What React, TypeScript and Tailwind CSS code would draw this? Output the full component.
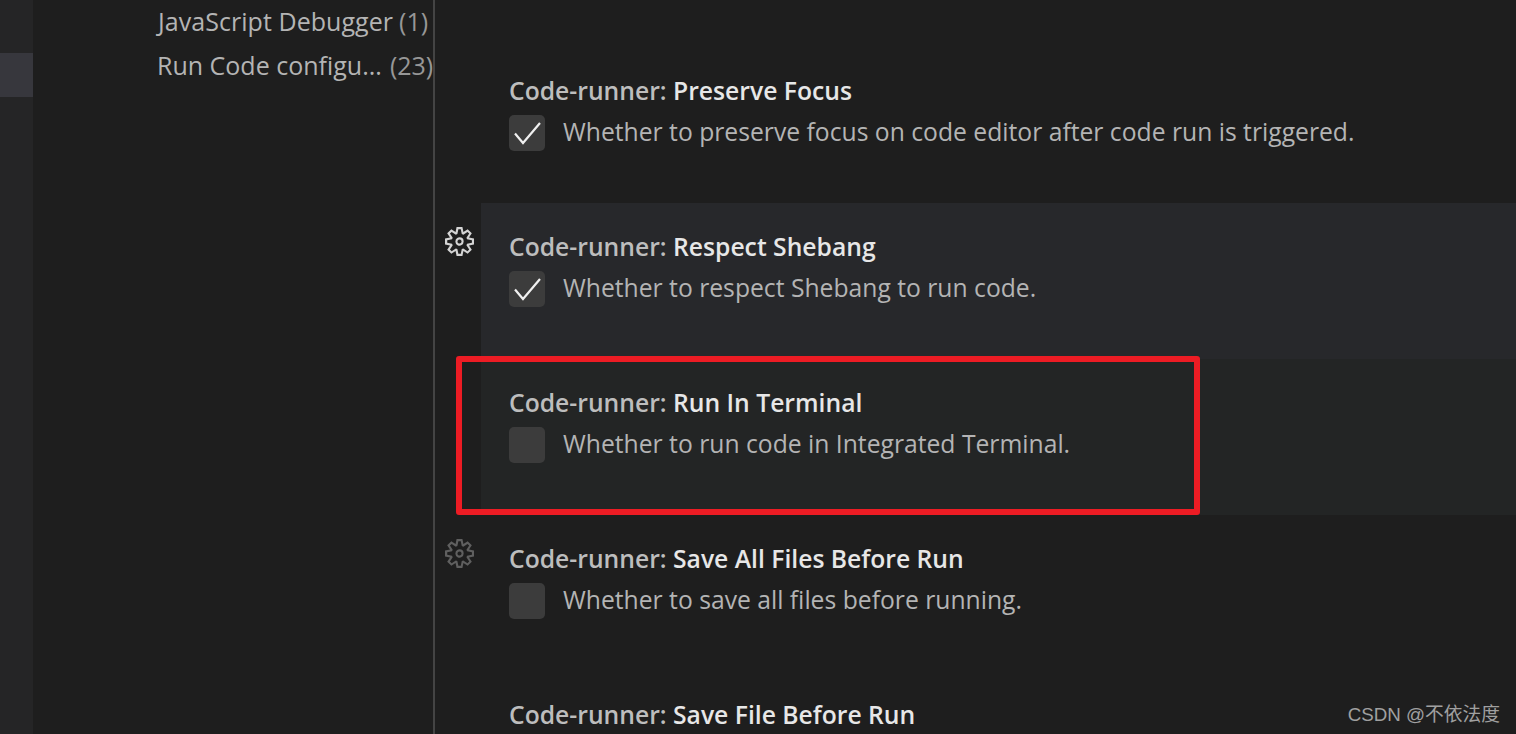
import { VscSettingsGear } from "react-icons/vsc";

type Setting = {
  name: string;
  description: string;
  checked: boolean;
  gear?: "bright" | "dim";
  rowClass?: string;
};

const settings: Setting[] = [
  {
    name: "Preserve Focus",
    description: "Whether to preserve focus on code editor after code run is triggered.",
    checked: true,
  },
  {
    name: "Respect Shebang",
    description: "Whether to respect Shebang to run code.",
    checked: true,
    gear: "bright",
    rowClass: "bg-[#27282b]",
  },
  {
    name: "Run In Terminal",
    description: "Whether to run code in Integrated Terminal.",
    checked: false,
    rowClass: "bg-[#232525]",
  },
  {
    name: "Save All Files Before Run",
    description: "Whether to save all files before running.",
    checked: false,
    gear: "dim",
  },
  {
    name: "Save File Before Run",
    description: "",
    checked: false,
  },
];

function SettingRow({ setting }: { setting: Setting }) {
  return (
    <div className="flex h-[156px] shrink-0">
      <div className="w-[46px] shrink-0 pt-[24px] pl-[10px]">
        {setting.gear && (
          <VscSettingsGear
            className={
              setting.gear === "bright"
                ? "text-[29px] text-[#d4d4d4]"
                : "text-[29px] text-[#5f5f5f]"
            }
          />
        )}
      </div>
      <div className={`flex-1 pl-[28px] pt-[26px] ${setting.rowClass ?? ""}`}>
        <div className="h-[34px] text-[24.7px] leading-[35px] font-semibold text-[#e7e7e7] whitespace-nowrap">
          <span className="text-[#bdbdbd]">Code-runner: </span>
          {setting.name}
        </div>
        {setting.description && (
          <div className="mt-[8px] flex items-start">
            <div className="h-[36px] w-[36px] shrink-0 rounded-[5px] bg-[#3c3c3c]">
              {setting.checked && (
                <svg className="h-[36px] w-[36px]" viewBox="0 0 36 36" fill="none">
                  <path d="M6 18.5 L14 28 L31 8" stroke="#f0f0f0" strokeWidth="2.2" />
                </svg>
              )}
            </div>
            <span className="ml-[18px] text-[24.7px] leading-[34px] text-[#b4b4b4] whitespace-nowrap">
              {setting.description}
            </span>
          </div>
        )}
      </div>
    </div>
  );
}

export default function App() {
  return (
    <div className="relative flex h-[734px] w-[1516px] overflow-hidden bg-[#1e1e1e] font-['Open_Sans','Noto_Sans',sans-serif]">
      {/* activity bar */}
      <div className="w-[33px] shrink-0 bg-[#252526] pt-[53px]">
        <div className="h-[44px] bg-[#37373d]" />
      </div>

      {/* settings tree */}
      <div className="w-[400px] shrink-0 pl-[124px] text-[25px] leading-[42px] text-[#b4b4b4] whitespace-nowrap">
        <div className="flex h-[44px]">
          <span className="ml-[1px] tracking-[0.05px]">JavaScript Debugger</span>
          <span className="ml-[6px] text-[#979797]">(1)</span>
        </div>
        <div className="flex h-[44px]">
          <span>Run Code configu...</span>
          <span className="ml-[8px] text-[#979797]">(23)</span>
        </div>
      </div>

      {/* settings list */}
      <div className="flex flex-1 flex-col border-l-2 border-[#444444] pt-[47px]">
        {settings.map((setting) => (
          <SettingRow key={setting.name} setting={setting} />
        ))}
      </div>

      {/* annotation drawn over the screenshot */}
      <div className="absolute left-[456px] top-[356px] h-[159px] w-[744px] rounded-[3px] border-[6px] border-[#ed1c24]" />

      <div className="absolute right-[16px] top-[702px] text-[18.75px] leading-[26px] text-[#a0a0a0] font-['Liberation_Sans','Noto_Sans_CJK_SC',sans-serif]">
        CSDN @不依法度
      </div>
    </div>
  );
}
